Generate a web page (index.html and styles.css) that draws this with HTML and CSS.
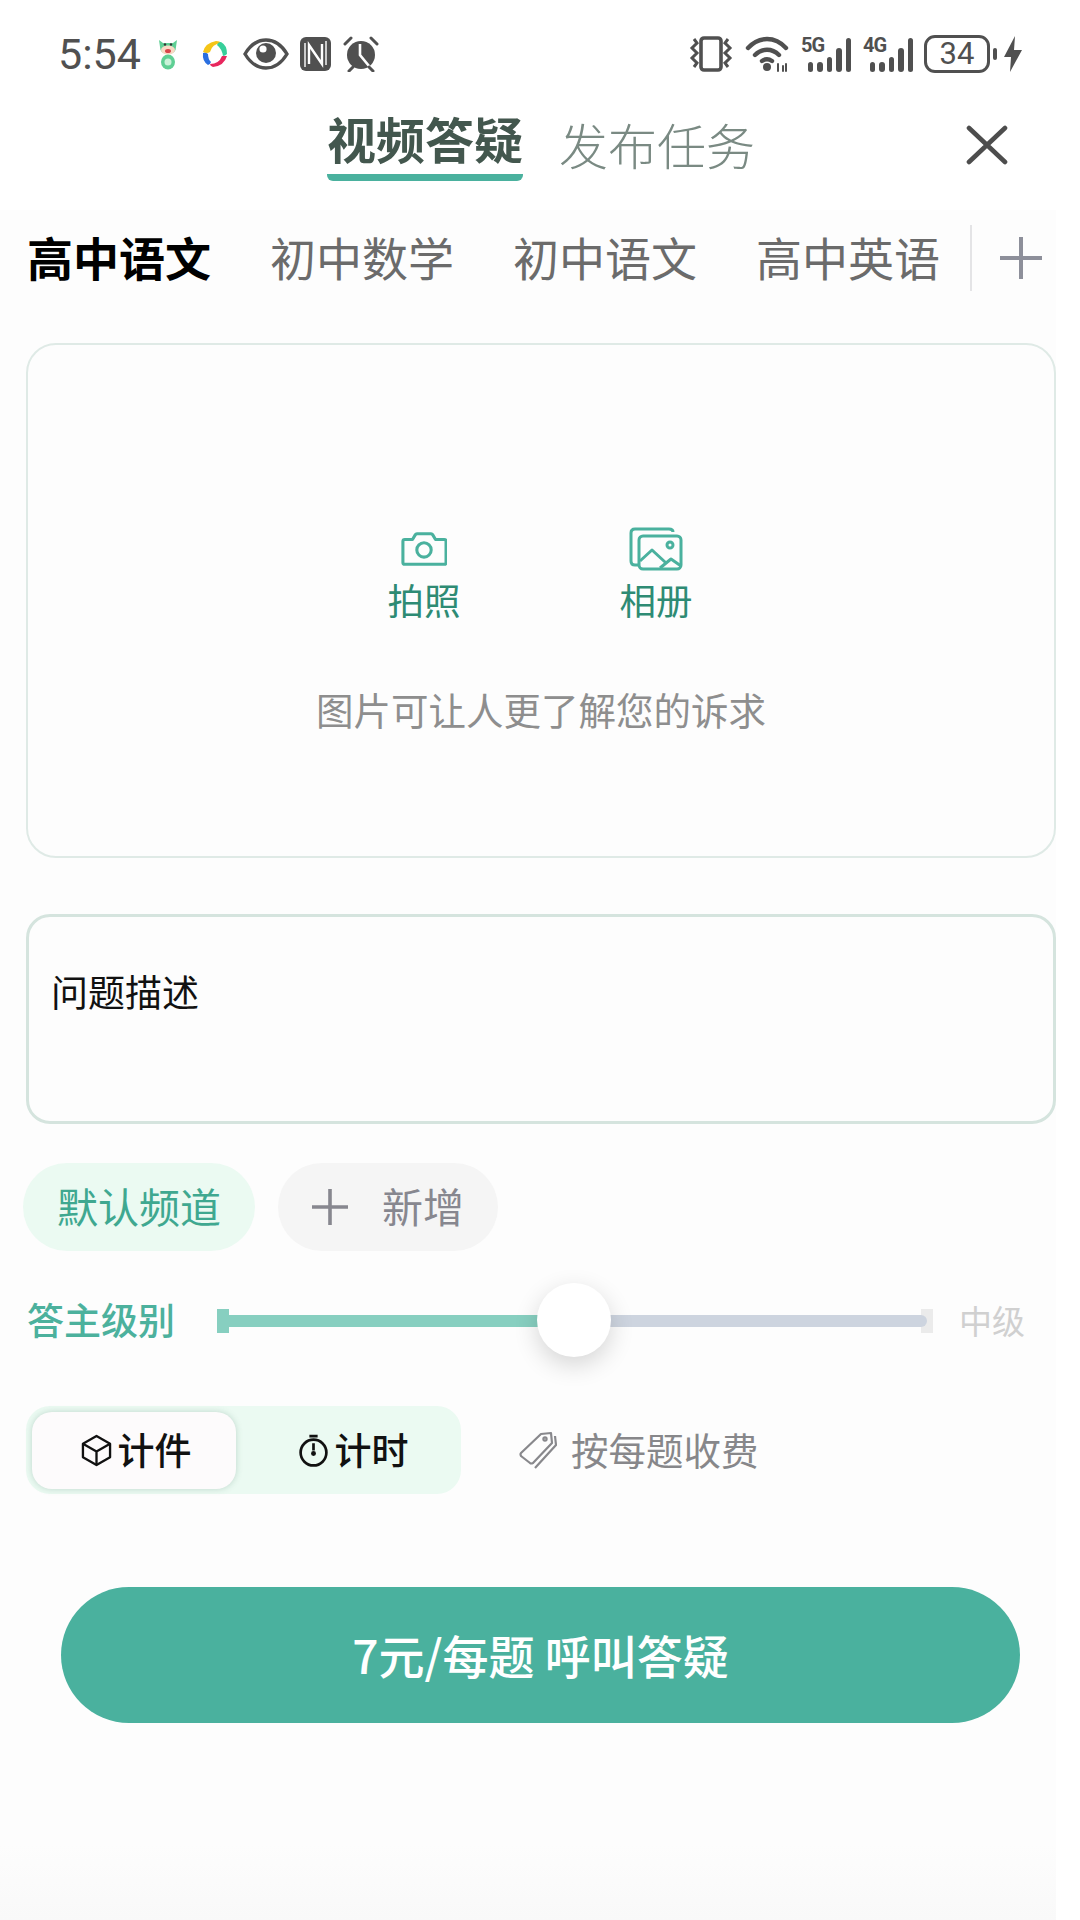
FILE: index.html
```html
<!DOCTYPE html>
<html lang="zh">
<head>
  <meta charset="UTF-8">
  <meta name="viewport" content="width=device-width, initial-scale=1.0">
  <title>视频答疑</title>
  <link rel="stylesheet" href="styles.css">
</head>
<body>
<div class="page">

  <!-- status bar -->
  <div class="status">
    <span class="time">5:54</span>
    <svg class="mascot" viewBox="0 0 20 32">
      <path d="M1 2l4 3h10l4-3-1 7q0 7-8 7T2 9z" fill="#5fcf94"/>
      <ellipse cx="10" cy="12" rx="7" ry="4.5" fill="#f8d9c4"/>
      <circle cx="7" cy="6.5" r="1.2" fill="#333"/>
      <circle cx="13" cy="6.5" r="1.2" fill="#333"/>
      <ellipse cx="10" cy="13" rx="3" ry="2" fill="#d8434a"/>
      <ellipse cx="10" cy="24" rx="7" ry="7.5" fill="#5fcf94"/>
      <ellipse cx="10" cy="24" rx="3.5" ry="3.5" fill="#c9f2d8"/>
    </svg>
    <svg class="pinwheel" viewBox="0 0 26 28">
      <path d="M1 12Q3 3 14 1q4 0 5 2-9 1-11 9-3 2-7 0z" fill="#f5c518"/>
      <path d="M19 2q6 3 6 12-2 2-4 2-1-7-6-11 1-3 4-3z" fill="#37cf9a"/>
      <path d="M25 16q-3 10-14 11-3-1-3-3 9 0 12-8z" fill="#e8275e"/>
      <path d="M1 13q3-1 5 1 0 5 3 8-1 3-3 3-6-4-5-12z" fill="#2a6fe0"/>
    </svg>
    <svg class="eye" viewBox="0 0 46 32">
      <path d="M2 16C8 6 15 2 23 2s15 4 21 14c-6 10-13 14-21 14S8 26 2 16z" fill="none" stroke="#505050" stroke-width="3.4"/>
      <circle cx="23" cy="15" r="10" fill="#505050"/>
      <circle cx="20" cy="11" r="3.6" fill="#fff"/>
    </svg>
    <svg class="nfc" viewBox="0 0 31 34">
      <rect width="31" height="34" rx="6" fill="#505050"/>
      <path d="M9 27V8l13 19V7" fill="none" stroke="#fff" stroke-width="2.4"/>
      <path d="M5 30V6M26 28V4" stroke="#fff" stroke-width="1.4"/>
    </svg>
    <svg class="alarm" viewBox="0 0 36 36">
      <circle cx="18" cy="19" r="14" fill="#505050"/>
      <path d="M17 8v11l9 11" fill="none" stroke="#fff" stroke-width="2.6"/>
      <path d="M2 8l6-6M34 8l-6-6M6 35l4-4M30 35l-4-4" stroke="#505050" stroke-width="3" stroke-linecap="round"/>
    </svg>

    <svg class="vibrate" viewBox="0 0 44 36" fill="none" stroke="#505050">
      <rect x="12" y="2" width="20" height="32" rx="3" stroke-width="3.6"/>
      <path d="M5 3l3 4-5 5 5 5-5 5 5 5-3 4M39 3l-3 4 5 5-5 5 5 5-5 5 3 4" stroke-width="3"/>
    </svg>
    <svg class="wifi" viewBox="0 0 44 36" fill="none" stroke="#505050" stroke-width="4.4" stroke-linecap="round">
      <path d="M3 12c11-12 27-12 38 0"/>
      <path d="M10 19c7-7 17-7 24 0"/>
      <path d="M17 25c3-2 7-2 10 0"/>
      <circle cx="22" cy="31" r="4" fill="#505050" stroke="none"/>
      <path d="M33 28v7M38 30v5M41 28v7" stroke-width="2"/>
    </svg>
    <div class="signal">
      <span class="net">5G</span>
      <i class="b1"></i><i class="b2"></i><i class="b3"></i><i class="b4"></i><i class="b5"></i>
    </div>
    <div class="signal">
      <span class="net">4G</span>
      <i class="b1"></i><i class="b2"></i><i class="b3"></i><i class="b4"></i><i class="b5"></i>
    </div>
    <div class="battery">34</div>
    <span class="battery-tip"></span>
    <svg class="bolt" viewBox="0 0 18 36"><path d="M11 0L0 21h7l-1 15 12-22h-8z" fill="#505050"/></svg>
  </div>

  <!-- top tabs -->
  <div class="tabs">
    <div class="tab active">视频答疑</div>
    <div class="tab">发布任务</div>
    <svg class="close" viewBox="0 0 42 40" fill="none" stroke="#4d4d4d" stroke-width="4.6" stroke-linecap="round">
      <path d="M3 3l36 34M39 3L3 37"/>
    </svg>
  </div>

  <div class="subjects">
    <span class="subject current">高中语文</span>
    <span class="subject">初中数学</span>
    <span class="subject">初中语文</span>
    <span class="subject">高中英语</span>
    <div class="subject-add">
      <svg viewBox="0 0 44 44" stroke="#8d8f9a" stroke-width="4"><path d="M22 1v42M1 22h42"/></svg>
    </div>
  </div>

  <div class="upload">
    <div class="upload-btns">
      <div class="upload-btn">
        <svg class="ico-cam" viewBox="0 0 48 36" fill="none" stroke="#4ab19e" stroke-width="3.2" stroke-linejoin="round">
          <path d="M4 8h8l3-5q1-1 2-1h14q1 0 2 1l3 5h9q2 0 2 2v22q0 2-2 2H4q-2 0-2-2V10q0-2 2-2z"/>
          <circle cx="24" cy="19" r="7.5"/>
        </svg>
        <span>拍照</span>
      </div>
      <div class="upload-btn">
        <svg class="ico-album" viewBox="0 0 54 44" fill="none" stroke="#4ab19e" stroke-width="3" stroke-linejoin="round">
          <path d="M9 38H6q-4 0-4-4V6q0-4 4-4h34q4 0 4 3"/>
          <rect x="10" y="9" width="42" height="33" rx="4"/>
          <circle cx="41" cy="18" r="3"/>
          <path d="M11 34l12-11 13 12M31 41l11-9 10 7"/>
        </svg>
        <span>相册</span>
      </div>
    </div>
    <p class="upload-hint">图片可让人更了解您的诉求</p>
  </div>

  <div class="desc">问题描述</div>

  <div class="chips">
    <span class="chip on">默认频道</span>
    <span class="chip add">
      <svg viewBox="0 0 38 38" stroke="#87878f" stroke-width="3.6"><path d="M19 1v36M1 19h36"/></svg>
      新增
    </span>
  </div>

  <div class="level">
    <span class="level-title">答主级别</span>
    <div class="slider">
      <div class="slider-fill"></div>
      <div class="slider-rest"></div>
      <div class="slider-thumb"></div>
    </div>
    <span class="level-val">中级</span>
  </div>

  <div class="billing">
    <div class="seg">
      <div class="seg-item picked">
        <svg viewBox="0 0 32 34" fill="none" stroke="#111" stroke-width="2.4" stroke-linejoin="round">
          <path d="M16 2l14 8v14l-14 8-14-8V10z"/>
          <path d="M2 10l14 8 14-8M16 18v14"/>
        </svg>
        <span>计件</span>
      </div>
      <div class="seg-item">
        <svg viewBox="0 0 30 32" fill="none" stroke="#111" stroke-width="2.6">
          <circle cx="15" cy="18" r="12.5"/>
          <path d="M11 2h8M15 9v7"/>
          <circle cx="15" cy="19" r="2.4" fill="#111" stroke="none"/>
        </svg>
        <span>计时</span>
      </div>
    </div>
    <div class="fee">
      <svg viewBox="0 0 38 38" fill="none" stroke="#88888c" stroke-width="2.2" stroke-linejoin="round">
        <path d="M2 22L22 3l10-1 1 10-19 20q-2 1-3 0L2 25q-1-2 0-3z"/>
        <circle cx="26" cy="8" r="1.6"/>
        <path d="M36 5l1 9-21 23"/>
      </svg>
      <span>按每题收费</span>
    </div>
  </div>

  <button class="call">7元/每题 呼叫答疑</button>
</div>
</body>
</html>
```

FILE: styles.css
```css
:root {
  --green: #4ab19e;
  --mint: #ebfaf2;
  --grey: #87878f;
  --cjk: "Noto Sans CJK SC", "Noto Sans", sans-serif;
}

* {
  box-sizing: border-box;
}

body {
  margin: 0;
  background: #fff;
  font-family: var(--cjk);
}

.page {
  width: 1056px;
  height: 1920px;
  background: linear-gradient(#fdfdfd 96%, #f9f9f9);
}

/* status bar */
.status {
  display: flex;
  align-items: center;
  height: 108px;
  padding: 0 58px 0 58px;
  background: #fff;
  margin-right: -24px;
}

.time {
  font: 43px Roboto, sans-serif;
  color: #505050;
  width: 100px;
}

.status svg {
  flex: none;
}

.mascot { width: 20px; height: 32px; }
.pinwheel { width: 26px; height: 28px; margin-left: 24px; }
.eye { width: 46px; height: 32px; margin-left: 15px; }
.nfc { width: 31px; height: 34px; margin-left: 11px; }
.alarm { width: 36px; height: 36px; margin-left: 12px; }
.vibrate { width: 44px; height: 36px; margin-left: auto; }
.wifi { width: 44px; height: 36px; margin-left: 12px; }

.signal {
  display: flex;
  align-items: flex-end;
  gap: 3px;
  height: 36px;
  width: 50px;
  margin-left: 12px;
  position: relative;
}

.net {
  position: absolute;
  left: 0;
  top: -2px;
  font: bold 20px/22px Roboto, sans-serif;
  color: #505050;
  letter-spacing: -1px;
}

.signal i {
  display: block;
  width: 6px;
  margin-left: 1px;
  background: #505050;
  border-radius: 3px;
}

.signal .b1 { height: 10px; margin-left: 7px; }
.signal .b2 { height: 10px; }
.signal .b3 { height: 15px; }
.signal .b4 { height: 24px; }
.signal .b5 { height: 34px; }

.battery {
  width: 66px;
  height: 38px;
  margin-left: 11px;
  border: 3px solid #505050;
  border-radius: 11px;
  font: 31px/32px Roboto, sans-serif;
  color: #505050;
  text-align: center;
}

.battery-tip {
  width: 4px;
  height: 12px;
  margin-left: 3px;
  background: #505050;
  border-radius: 2px;
}

.bolt { width: 18px; height: 36px; margin-left: 7px; }

/* top tabs */
.tabs {
  display: flex;
  align-items: flex-start;
  gap: 36px;
  height: 102px;
  padding-left: 327px;
  background: #fff;
  margin-right: -24px;
}

.tab {
  font-size: 49px;
  line-height: 60px;
  font-weight: 300;
  color: #7a8a83;
  margin-top: 6px;
}

.tab.active {
  font-weight: 700;
  color: #43574e;
  height: 73px;
  margin-top: 0;
  border-bottom: 7px solid var(--green);
  border-radius: 0 0 6px 6px;
}

.close {
  width: 42px;
  height: 40px;
  margin: 17px 0 0 175px;
}

.subjects {
  display: flex;
  align-items: center;
  height: 132px;
  padding: 0 0 40px 27px;
  background: #fdfdfd;
}

.subject {
  width: 243px;
  font-size: 46px;
  color: #6b6b6b;
}

.subject.current {
  color: #000;
  font-weight: 700;
}

.subject-add {
  display: flex;
  align-items: center;
  margin: 4px 0 0 -29px;
  height: 66px;
  padding-left: 27px;
  border-left: 2px solid #e4e4e6;
}

.subject-add svg {
  width: 44px;
  height: 44px;
}

/* upload box */
.upload {
  display: flex;
  flex-direction: column;
  align-items: center;
  justify-content: flex-end;
  height: 515px;
  margin-left: 26px;
  padding-bottom: 122px;
  border: 2px solid #dfeae6;
  border-radius: 30px;
  margin-top: 1px;
}

.upload-btns {
  display: flex;
  gap: 159px;
  padding-right: 2px;
}

.upload-btn {
  display: flex;
  flex-direction: column;
  align-items: center;
  justify-content: flex-end;
  width: 73px;
  font-size: 36.5px;
  line-height: 50px;
  color: #2e8b74;
}

.ico-cam { width: 46px; height: 36px; margin-bottom: 8px; }
.ico-album { width: 54px; height: 44px; margin-bottom: 4px; }

.upload-hint {
  margin: 59px 0 0;
  font-size: 37.5px;
  line-height: 50px;
  color: #8e8e8e;
}

.desc {
  height: 210px;
  margin: 56px 0 0 26px;
  padding: 47px 22px;
  border: 3px solid #d5e4de;
  border-radius: 24px;
  font-size: 37px;
  line-height: 54px;
  color: #111;
}

.chips {
  display: flex;
  gap: 23px;
  margin: 39px 0 0 23px;
}

.chip {
  display: flex;
  align-items: center;
  height: 88px;
  padding-bottom: 4px;
  border-radius: 44px;
  font-size: 41px;
}

.chip.on {
  padding-left: 34px;
  padding-right: 34px;
  background: var(--mint);
  color: #3fa890;
}

.chip.add {
  width: 220px;
  padding-left: 33px;
  gap: 33px;
  background: #f5f5f5;
  color: var(--grey);
}

.chip.add svg {
  width: 38px;
  height: 38px;
  margin-top: 4px;
}

/* level slider */
.level {
  display: flex;
  align-items: center;
  height: 72px;
  margin: 34px 0 0 27px;
}

.level-title {
  width: 190px;
  padding-bottom: 4px;
  font-size: 37px;
  font-weight: 500;
  color: #4cb19d;
}

.slider {
  position: relative;
  display: flex;
  align-items: center;
  width: 716px;
  height: 24px;
}

.slider::before,
.slider::after {
  content: "";
  position: absolute;
  top: 0;
  width: 12px;
  height: 24px;
}

.slider::before {
  left: 0;
  background: #87cfc0;
}

.slider::after {
  right: 0;
  background: #ebebeb;
}

.slider-fill {
  width: 358px;
  height: 12px;
  background: #87cfc0;
}

.slider-rest {
  position: relative;
  z-index: 1;
  flex: 1;
  height: 12px;
  margin-right: 6px;
  background: #cdd4df;
  border-radius: 0 6px 6px 0;
}

.slider-thumb {
  position: absolute;
  z-index: 2;
  left: 320px;
  top: -26px;
  width: 74px;
  height: 74px;
  border-radius: 50%;
  background: #fff;
  box-shadow: 0 8px 24px rgba(0, 0, 0, 0.16);
}

.level-val {
  margin-left: 26px;
  padding-bottom: 2px;
  font-size: 33px;
  color: #d0d0d0;
}

/* billing mode */
.billing {
  display: flex;
  align-items: center;
  margin: 49px 0 0 26px;
}

.seg {
  display: flex;
  width: 435px;
  height: 88px;
  padding: 6px;
  background: var(--mint);
  border-radius: 24px;
}

.seg-item {
  display: flex;
  align-items: center;
  justify-content: center;
  gap: 6px;
  width: 205px;
  height: 77px;
  border-radius: 20px;
  font-size: 37px;
  font-weight: 500;
  color: #111;
}

.seg-item span {
  padding-bottom: 4px;
}

.seg-item.picked {
  padding-left: 4px;
  background: #fdfbfc;
  box-shadow: 0 0 6px rgba(60, 110, 90, 0.25);
}

.seg-item svg {
  width: 31px;
  height: 33px;
}

.seg-item + .seg-item {
  margin-left: 15px;
}

.fee {
  display: flex;
  align-items: center;
  gap: 14px;
  margin-left: 58px;
  font-size: 37.5px;
  color: #87878a;
}

.fee span {
  padding-bottom: 4px;
}

.fee svg {
  width: 38px;
  height: 38px;
}

.call {
  display: block;
  width: 959px;
  height: 136px;
  margin: 93px 0 0 61px;
  padding-bottom: 4px;
  border: none;
  border-radius: 68px;
  background: var(--green);
  color: #fff;
  font-family: var(--cjk);
  font-size: 46px;
  font-weight: 500;
}
```
